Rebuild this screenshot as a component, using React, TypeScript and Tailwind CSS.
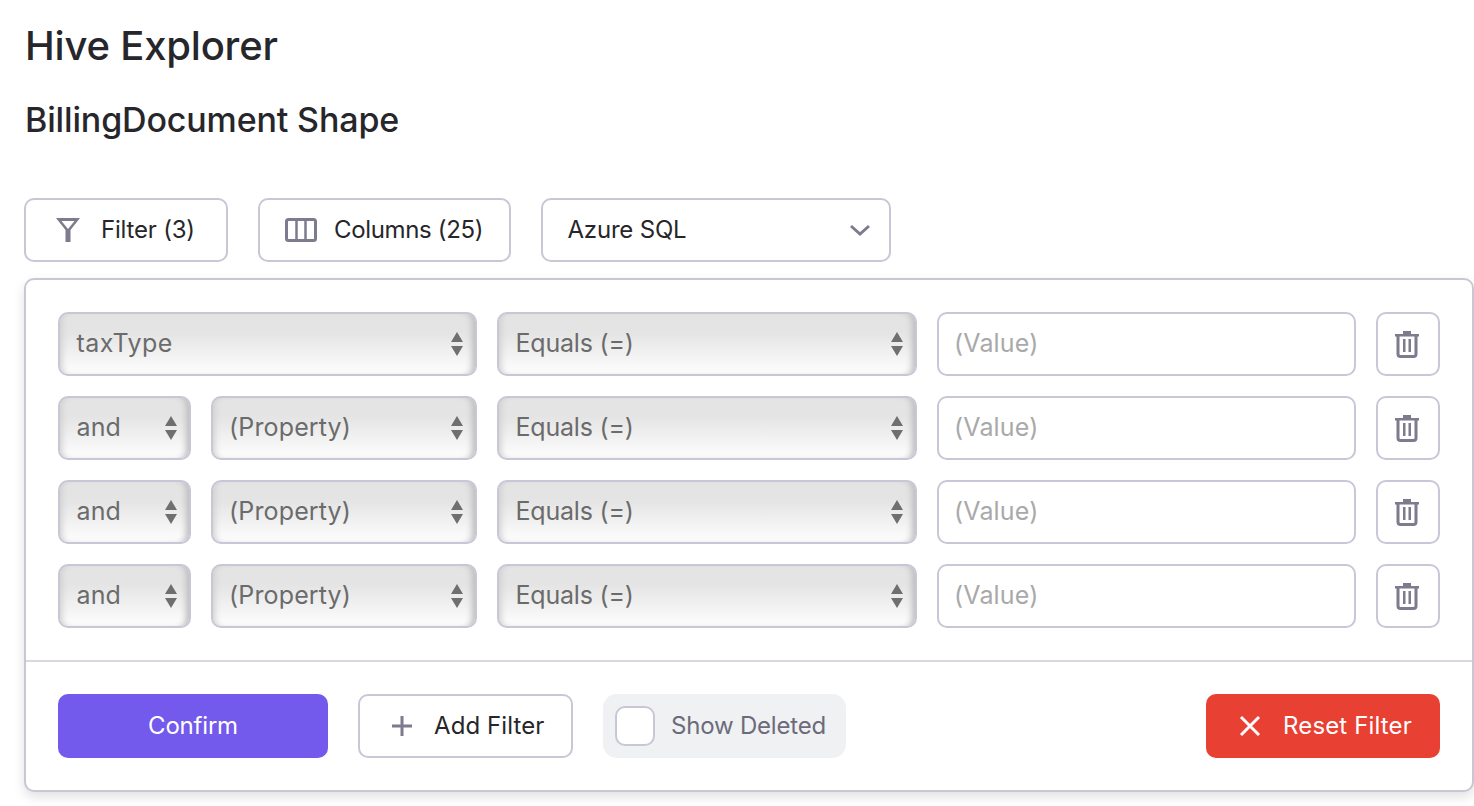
import type { ReactNode } from 'react'

const FONT = "font-['Inter','Noto_Sans',sans-serif]"

function Arrows() {
  return (
    <svg width="12" height="26" viewBox="0 0 12 26" className="shrink-0">
      <path d="M6 1 L12 11 H0 Z" fill="#6f6f6f" />
      <path d="M0 15 H12 L6 25 Z" fill="#6f6f6f" />
    </svg>
  )
}

function NativeSelect({ label, className }: { label: string; className: string }) {
  return (
    <div
      className={`flex h-16 shrink-0 items-center justify-between rounded-[10px] border-2 border-[#c9c7d6] bg-gradient-to-b from-[#e4e4e4] from-30% to-[#fafafa] to-90% pr-[12px] pl-[16.500px] text-[25px] text-[#6b6b6b] shadow-[inset_7px_0_6px_-5px_#cfcfcf,inset_-7px_0_6px_-4px_#bdbdbd] ${className}`}
    >
      <span className={label === 'taxType' ? 'tracking-[0.5px]' : label === 'Equals (=)' ? 'tracking-[-0.2px]' : label === '(Property)' ? 'ml-[-0.5px] tracking-[0.15px]' : 'tracking-[0.1px]'}>
        {label}
      </span>
      <Arrows />
    </div>
  )
}

function TrashIcon() {
  return (
    <svg width="24" height="28" viewBox="0 0 24 28" fill="none">
      <path d="M0 4 H24 V6.500 H0 Z M8 1 H16 V4 H8 Z" fill="#7d7b8e" />
      <path d="M3 5 V24 Q3 26.500 5.500 26.500 H18.500 Q21 26.500 21 24 V5" stroke="#7d7b8e" strokeWidth="3" />
      <path d="M9.250 9 V22 M14.750 9 V22" stroke="#7d7b8e" strokeWidth="2.500" />
    </svg>
  )
}

function FilterRow({ first }: { first?: boolean }) {
  return (
    <div className="flex h-16 gap-5">
      {first ? (
        <NativeSelect label="taxType" className="w-[419px]" />
      ) : (
        <>
          <NativeSelect label="and" className="w-[133px]" />
          <NativeSelect label="(Property)" className="w-[266px]" />
        </>
      )}
      <NativeSelect label="Equals (=)" className="w-[420px]" />
      <div className="flex h-16 w-[419px] items-center rounded-[10px] border-2 border-[#c9c7d6] bg-white pl-[15px] text-[25px] tracking-[0.15px] text-[#a9a9a9]">
        (Value)
      </div>
      <button className="flex h-16 w-16 items-center justify-center rounded-[10px] border-2 border-[#c9c7d6] bg-white pr-[3px]">
        <TrashIcon />
      </button>
    </div>
  )
}

function OutlineButton({ children, className }: { children: ReactNode; className: string }) {
  return (
    <button
      className={`flex h-16 shrink-0 items-center rounded-[10px] border-2 border-[#c9c7d6] bg-white text-[24px] text-[#26262b] ${className}`}
    >
      {children}
    </button>
  )
}

export default function App() {
  return (
    <div className={`h-[806px] w-[1474px] overflow-hidden bg-white pt-[21px] pl-6 ${FONT}`}>
      <h1 className="ml-px h-[50px] text-[40px] leading-[50px] font-medium tracking-[-0.2px] text-[#26262b]">
        Hive Explorer
      </h1>
      <h2 className="mt-[25px] ml-px h-[48px] text-[34px] leading-[48px] font-medium tracking-[-0.150px] text-[#26262b]">
        BillingDocument Shape
      </h2>

      <div className="mt-[54px] flex gap-[30px]">
        <OutlineButton className="w-[204px] pl-[30px] tracking-[-0.2px]">
          <svg width="24" height="24" viewBox="0 0 24 24">
            <path
              fillRule="evenodd"
              d="M0 0 H24 L14.500 12 V24 H9.500 V12 Z M5.500 3 L12 11 L18.500 3 Z"
              fill="#7d7b8e"
            />
          </svg>
          <span className="ml-[21px]">Filter (3)</span>
        </OutlineButton>
        <OutlineButton className="w-[253px] pl-[25px] tracking-[-0.350px]">
          <svg width="32" height="24" viewBox="0 0 32 24" fill="none">
            <rect x="1.500" y="1.500" width="29" height="21" rx="2" stroke="#7d7b8e" strokeWidth="3" />
            <path d="M11.500 2 V22 M20.500 2 V22" stroke="#7d7b8e" strokeWidth="2.500" />
          </svg>
          <span className="ml-[17px]">Columns (25)</span>
        </OutlineButton>
        <OutlineButton className="w-[350px] justify-between pr-[18px] pl-[24.500px] tracking-[-0.2px]">
          <span>Azure SQL</span>
          <svg width="22" height="12" viewBox="0 0 22 12" fill="none">
            <path d="M2 2 L11 10 L20 2" stroke="#7d7b8e" strokeWidth="3" />
          </svg>
        </OutlineButton>
      </div>

      <div className="mt-4 h-[514px] w-[1450px] rounded-[10px] border-2 border-[#c9c7d6] bg-white shadow-[0_5px_12px_rgba(0,0,0,0.12)]">
        <div className="flex flex-col gap-5 px-8 pt-8 pb-8">
          <FilterRow first />
          <FilterRow />
          <FilterRow />
          <FilterRow />
        </div>
        <div className="h-0.5 bg-[#d9d8e0]" />
        <div className="flex items-center px-8 pt-8">
          <button className="flex h-16 w-[270px] items-center justify-center rounded-[10px] bg-[#7359ec] text-[24px] tracking-[-0.2px] text-white">
            Confirm
          </button>
          <OutlineButton className="ml-[30px] w-[215px] pl-[30px] tracking-[0.1px]">
            <svg width="24" height="24" viewBox="0 0 24 24" fill="none">
              <path d="M12 2 V22 M2 12 H22" stroke="#7d7b8e" strokeWidth="3" />
            </svg>
            <span className="ml-[20px]">Add Filter</span>
          </OutlineButton>
          <label className="ml-[30px] flex h-16 w-[243px] items-center rounded-[14px] bg-[#f0f1f3] pl-3 text-[24px] tracking-[-0.2px] text-[#6c6b7a]">
            <span className="h-10 w-10 rounded-[10px] border-2 border-[#c9c7d6] bg-white" />
            <span className="ml-4">Show Deleted</span>
          </label>
          <button className="ml-auto flex h-16 w-[234px] items-center rounded-[10px] bg-[#e94034] pl-[33px] text-[24px] tracking-[0.15px] text-white">
            <svg width="22" height="22" viewBox="0 0 22 22" fill="none">
              <path d="M2 2 L20 20 M20 2 L2 20" stroke="white" strokeWidth="3" />
            </svg>
            <span className="ml-[22px]">Reset Filter</span>
          </button>
        </div>
      </div>
    </div>
  )
}
